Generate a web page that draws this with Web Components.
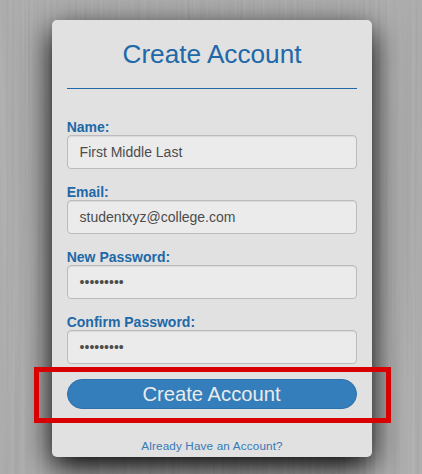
<!DOCTYPE html>
<html lang="en">
<head>
<meta charset="utf-8">
<title>Create Account</title>
<style>
html, body { margin: 0; height: 100%; overflow: hidden; }
body { font-family: "Liberation Sans", Arial, sans-serif; font-size: 14px; line-height: 20px; color: #555; }
</style>
</head>
<body>
<brushed-page>
  <account-card heading="Create Account">
    <form-field label="Name:">First Middle Last</form-field>
    <form-field label="Email:">studentxyz@college.com</form-field>
    <form-field label="New Password:">•••••••••</form-field>
    <form-field label="Confirm Password:">•••••••••</form-field>
    <pill-button>Create Account</pill-button>
    <text-link slot="footer">Already Have an Account?</text-link>
  </account-card>
</brushed-page>
<script>
class Base extends HTMLElement {
  constructor() {
    super();
    this.attachShadow({ mode: 'open' }).innerHTML = this.constructor.markup;
  }
}

class BrushedPage extends Base {
  static markup = `
    <style>
      :host { display: flex; justify-content: center; align-items: flex-start; box-sizing: border-box;
        width: 422px; height: 474px; padding: 20px 0 0 2px; position: relative; overflow: hidden; background: #a9a9a9; }
      svg { position: absolute; inset: 0; }
    </style>
    <svg width="422" height="474" aria-hidden="true">
      <filter id="brush" x="0" y="0" width="100%" height="100%" color-interpolation-filters="sRGB">
        <feTurbulence type="fractalNoise" baseFrequency="0.32 0.003" numOctaves="3" seed="8"/>
        <feColorMatrix values="0.07 0 0 0 0.64  0.07 0 0 0 0.64  0.07 0 0 0 0.64  0 0 0 0 1"/>
      </filter>
      <rect width="422" height="474" filter="url(#brush)"/>
    </svg>
    <slot></slot>`;
}

class AccountCard extends Base {
  static markup = `
    <style>
      :host { display: flex; flex-direction: column; position: relative; box-sizing: border-box; width: 320px; height: 437px;
        padding: 0 15px; border-radius: 5px; background: #e1e1e1; box-shadow: 0 10px 30px #000; }
      h1 { margin: 0 0 29px; height: 69px; box-sizing: border-box; border-bottom: 1px solid #2068a6;
        font-size: 26.2px; font-weight: 400; line-height: 68px; text-align: center; color: #2068a8; }
      .fields { display: flex; flex-direction: column; gap: 15px; }
      footer { margin-top: 26px; text-align: center; }
    </style>
    <h1></h1>
    <div class="fields"><slot></slot></div>
    <footer><slot name="footer"></slot></footer>`;
  connectedCallback() { this.shadowRoot.querySelector('h1').textContent = this.getAttribute('heading'); }
}

class FormField extends Base {
  static markup = `
    <style>
      :host { display: block; height: 50px; }
      label { display: block; height: 17px; line-height: 18px; font-weight: 700; color: #2068a8; text-indent: -.3px; }
      .box { box-sizing: border-box; height: 34px; padding: 6px 11.6px; border: 1px solid #bbb; border-radius: 4px;
        background: #ebebeb; box-shadow: inset 0 1px 1px rgba(0,0,0,.075); line-height: 20px; color: #4c4c4c; }
    </style>
    <label></label>
    <div class="box"><slot></slot></div>`;
  connectedCallback() { this.shadowRoot.querySelector('label').textContent = this.getAttribute('label'); }
}

class PillButton extends Base {
  static markup = `
    <style>
      :host { display: block; position: relative; height: 30px; margin-top: 1px; }
      .pill { box-sizing: border-box; height: 30px; border: 1px solid #2e70aa; border-radius: 15px; background: #347ebb;
        font-size: 20.2px; line-height: 28px; text-align: center; text-indent: -1px; color: #ebebeb; }
      .mark { position: absolute; left: -33px; top: -12px; width: 357px; height: 56px; box-sizing: border-box; border: 5px solid #d80000; }
    </style>
    <div class="pill"><slot></slot></div>
    <div class="mark"></div>`;
}

class TextLink extends Base {
  static markup = `
    <style>:host { font-size: 11.7px; letter-spacing: .16px; line-height: 20px; color: #347ab7; }</style>
    <slot></slot>`;
}

customElements.define('form-field', FormField);
customElements.define('pill-button', PillButton);
customElements.define('text-link', TextLink);
customElements.define('account-card', AccountCard);
customElements.define('brushed-page', BrushedPage);
</script>
</body>
</html>
